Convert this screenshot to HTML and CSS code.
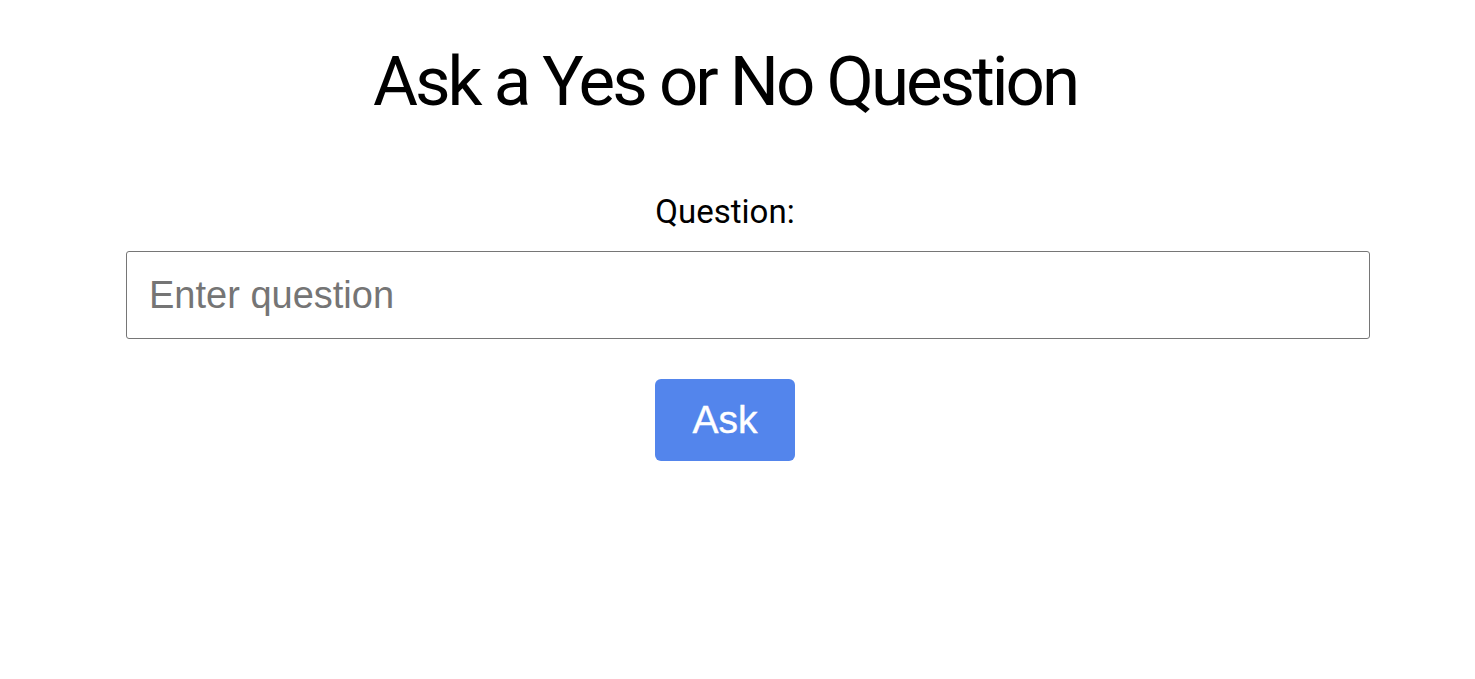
FILE: index.html
```html
<!DOCTYPE html>
<html lang="en">
  <head>
    <meta charset="utf-8">
    <title>Ask a Yes or No Question</title>
    <link rel="stylesheet" href="styles.css">
  </head>
  <body>
    <div class="page">
      <h1 class="title">Ask a Yes or No Question</h1>
      <form class="ask-form" onsubmit="return false">
        <label class="ask-label" for="question">Question:</label>
        <input class="ask-input" id="question" type="text" placeholder="Enter question">
        <button class="ask-button" type="submit">Ask</button>
      </form>
    </div>
  </body>
</html>
```

FILE: styles.css
```css
body {
  margin: 0;
  background: #fff;
  color: #000;
  font-family: Roboto, Inter, "Liberation Sans", sans-serif;
}

.page {
  width: 1450px;
  text-align: center;
}

.title {
  margin: 0;
  padding-top: 44px;
  font-size: 69px;
  font-weight: 400;
  letter-spacing: -3px;
  line-height: 76px;
}

.ask-form {
  display: flex;
  flex-direction: column;
  align-items: center;
}

.ask-label {
  margin-top: 74px;
  font-size: 33px;
  line-height: 36px;
}

.ask-input {
  box-sizing: border-box;
  align-self: flex-start;
  margin-left: 126px;
  margin-top: 21px;
  width: 1244px;
  height: 88px;
  padding: 0 22px;
  border: 1px solid #767676;
  border-radius: 3px;
  font-family: "Liberation Sans", Arial, sans-serif;
  font-size: 38px;
  color: #000;
}

.ask-input::placeholder {
  color: #757575;
}

.ask-button {
  margin-top: 40px;
  width: 140px;
  height: 82px;
  border: 0;
  border-radius: 6px;
  background: #5385ec;
  color: #fff;
  font-family: "Liberation Sans", Arial, sans-serif;
  font-size: 39px;
  -webkit-text-stroke: 0.4px #fff;
  cursor: pointer;
}
```
